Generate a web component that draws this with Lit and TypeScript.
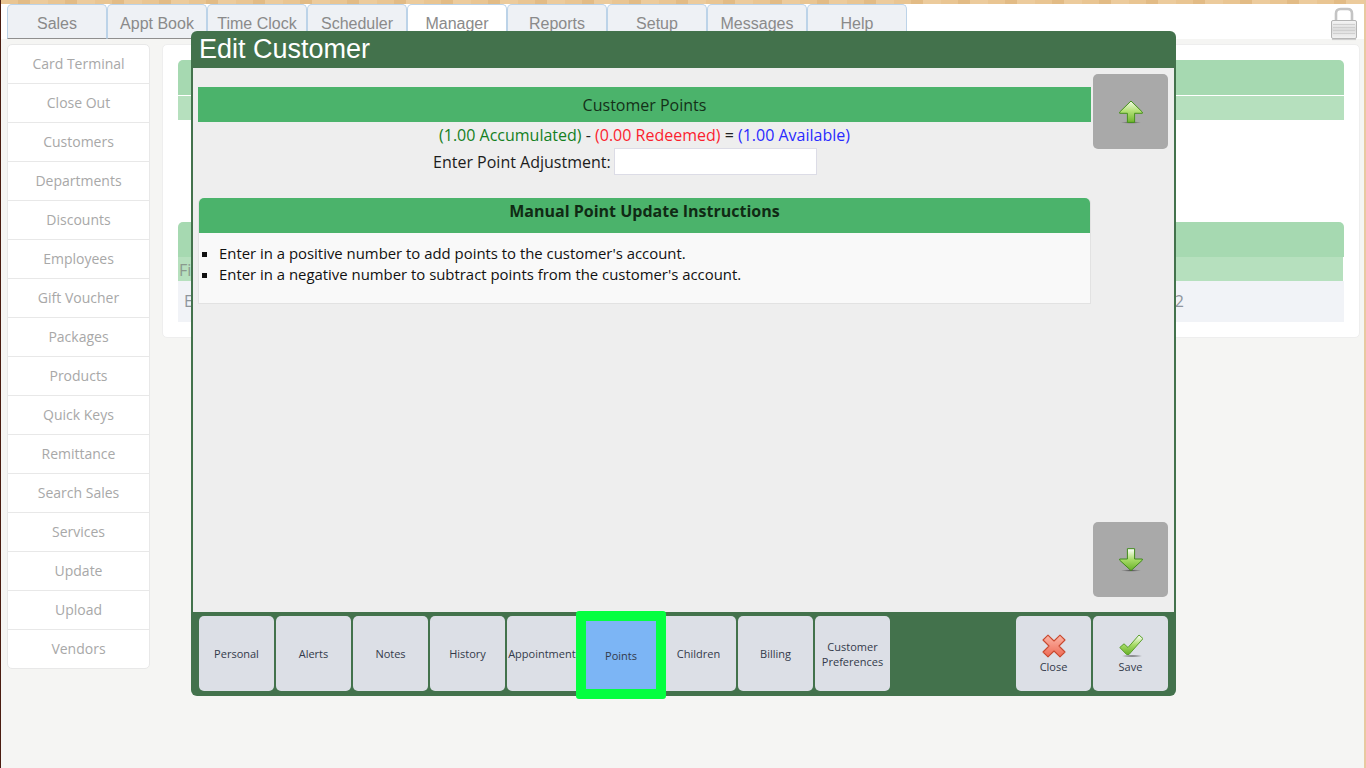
import { LitElement, html, css, svg } from "lit";
import { customElement } from "lit/decorators.js";

const TABS = ["Sales", "Appt Book", "Time Clock", "Scheduler", "Manager", "Reports", "Setup", "Messages", "Help"];
const SIDE = ["Card Terminal", "Close Out", "Customers", "Departments", "Discounts", "Employees", "Gift Voucher", "Packages", "Products", "Quick Keys", "Remittance", "Search Sales", "Services", "Update", "Upload", "Vendors"];

const defs = svg`
  <defs>
    <linearGradient id="gUp" x1="0" y1="0" x2="0" y2="1"><stop offset="0" stop-color="#f4fbe8"/><stop offset=".45" stop-color="#b6e27a"/><stop offset="1" stop-color="#6fb52c"/></linearGradient>
    <linearGradient id="gDown" x1="0" y1="0" x2="0" y2="1"><stop offset="0" stop-color="#ffffff"/><stop offset=".5" stop-color="#a8dc68"/><stop offset="1" stop-color="#68b028"/></linearGradient>
    <linearGradient id="gRed" x1="0" y1="0" x2="0" y2="1"><stop offset="0" stop-color="#fbb5a6"/><stop offset="1" stop-color="#ee6a55"/></linearGradient>
    <linearGradient id="gLock" x1="0" y1="0" x2="0" y2="1"><stop offset="0" stop-color="#f6f6f6"/><stop offset=".5" stop-color="#dcdcdc"/><stop offset="1" stop-color="#f2f2f2"/></linearGradient>
    <radialGradient id="gShadow"><stop offset="0" stop-color="#333" stop-opacity=".75"/><stop offset="1" stop-color="#333" stop-opacity="0"/></radialGradient>
  </defs>`;

const arrowUp = html`<svg class="ico" width="24" height="24" viewBox="0 0 24 24">${defs}
  <ellipse cx="12" cy="22.5" rx="10" ry="1.3" fill="url(#gShadow)"/>
  <path d="M12 1 L23.3 12 V13.3 H15.6 V22.4 H8.4 V13.3 H.7 V12 Z" fill="url(#gUp)" stroke="#46921c" stroke-width="1" stroke-linejoin="round"/>
</svg>`;
const arrowDown = html`<svg class="ico" width="24" height="24" viewBox="0 0 24 24">${defs}
  <ellipse cx="12" cy="22.5" rx="10" ry="1.3" fill="url(#gShadow)"/>
  <path d="M8.4 .7 H15.6 V11 H23.3 V12.2 L12 22.6 L.7 12.2 V11 H8.4 Z" fill="url(#gDown)" stroke="#3f8a1a" stroke-width="1" stroke-linejoin="round"/>
</svg>`;
const closeIco = html`<svg class="ico" width="24" height="24" viewBox="0 0 24 24">${defs}
  <path d="M6 1.2 L12 7 L18 1.2 L23 6 L17 12 L23 18 L18 22.8 L12 17 L6 22.8 L1 18 L7 12 L1 6 Z" fill="url(#gRed)" stroke="#c8492f" stroke-width="1.1" stroke-linejoin="round"/>
</svg>`;
const saveIco = html`<svg class="ico" width="24" height="24" viewBox="0 0 24 24">${defs}
  <ellipse cx="13" cy="22" rx="11" ry="1.3" fill="url(#gShadow)"/>
  <path d="M.8 13.5 L5 9.8 L9 13.5 L20 1 L24 4.6 L10 20.5 H7.6 Z" fill="url(#gDown)" stroke="#5a9e2c" stroke-width="1" stroke-linejoin="round"/>
</svg>`;
const lockIco = html`<svg width="26" height="34" viewBox="0 0 26 34">${defs}
  <path d="M5 15 V6.5 Q5 2 9.5 2 H16.5 Q21 2 21 6.5 V15" fill="none" stroke="#c4c4c4" stroke-width="2.6"/>
  <rect x=".5" y="13.5" width="25" height="18" rx="1.5" fill="url(#gLock)" stroke="#b4b4b4"/>
  <path d="M2 17.5 H24 M2 20.5 H24 M2 23.5 H24 M2 26.5 H24" stroke="#cfcfcf" stroke-width="1"/>
  <rect x="1" y="31.5" width="24" height="1.6" fill="#bdbdbd" opacity=".7"/>
</svg>`;

@customElement("app-root")
export class AppRoot extends LitElement {
  static styles = css`
    :host { display: block; position: relative; width: 1366px; height: 768px; overflow: hidden; background: #f5f5f3; font-family: "Open Sans", sans-serif; }
    .frame { height: 768px; box-sizing: border-box; border-left: 1px solid #4a1c10; border-right: 2px solid #e8c9a0; display: flex; flex-direction: column; }
    .wood { height: 4px; flex: none; background: repeating-linear-gradient(90deg, #e9c592 0 17px, #e2bb85 17px 29px, #eccb9c 29px 47px); }
    .nav { height: 35px; flex: none; box-sizing: border-box; background: #fff; display: flex; padding-left: 6px; position: relative; }
    .tab { width: 100px; height: 35px; box-sizing: border-box; background: #eef1f5; border: 1px solid #bcd3e8; border-bottom: 1px solid #8f8f8f; border-radius: 5px 5px 0 0; font: 16px/37px "Liberation Sans", sans-serif; color: #8a8a8a; text-align: center; }
    .tab.on { background: #fff; border-bottom-color: #fff; }
    .lock { position: absolute; right: 7px; top: 3px; }
    .main { display: flex; align-items: flex-start; gap: 12px; padding: 5px 4px 0 6px; }
    .side { width: 143px; box-sizing: border-box; flex: none; background: #fff; border: 1px solid #e8e8e8; border-radius: 5px; }
    .side div { height: 39px; box-sizing: border-box; border-bottom: 1px solid #e8e8e8; font-size: 14px; line-height: 38px; color: #a8a8a8; text-align: center; }
    .side div:last-child { height: 38px; border-bottom: 0; }
    .card { flex: 1; height: 294px; box-sizing: border-box; background: #fff; border: 1px solid #eeeeee; border-radius: 5px; padding: 15px; }
    .h1 { height: 35px; background: #a6d9b1; border-radius: 5px 5px 0 0; }
    .h2 { height: 24px; margin-top: 1px; background: #b6e0be; }
    .gap { height: 102px; }
    .h3 { height: 24px; background: #b6e0be; margin-right: 1px; font-size: 16px; line-height: 26px; color: #8a9a8e; padding-left: 1px; }
    .row { height: 41px; background: #f1f3f7; display: flex; justify-content: space-between; padding: 0 160px 0 6px; font-size: 16px; line-height: 41px; color: #8e959c; }
    .row span:last-child { margin-right: -160px; padding-right: 160px; }

    .modal { position: absolute; left: 191px; top: 31px; width: 985px; height: 665px; box-sizing: border-box; background: #43724c; border-radius: 6px; display: flex; flex-direction: column; padding: 0 2px; }
    .title { height: 37px; flex: none; box-sizing: border-box; padding-left: 6px; font: 27px/37px "Liberation Sans", sans-serif; color: #fff; }
    .body { height: 544px; flex: none; background: #eeeeee; display: flex; gap: 2px; padding: 6px 6px 0 5px; box-sizing: border-box; }
    .content { width: 893px; flex: none; padding-top: 13px; }
    .bar { height: 35px; background: #4bb36b; font-size: 16px; line-height: 36px; color: #143018; text-align: center; padding-left: 0; }
    .stats { text-align: center; font-size: 16px; line-height: 22px; margin-top: 2px; color: #222; padding-left: 0; }
    .g { color: #14801e; } .r { color: #fb1f2e; } .b { color: #2a2aff; }
    .adj { display: flex; height: 27px; margin-top: 2px; padding-left: 235px; align-items: center; gap: 3px; font-size: 16px; color: #1c1c1c; }
    .adj i { display: block; width: 203px; height: 27px; box-sizing: border-box; background: #fff; border: 1px solid #dcdce6; }
    .panel { margin-top: 23px; box-sizing: border-box; height: 106px; background: #f9f9f9; border: 1px solid #e2e2e2; border-top: 0; border-radius: 5px 5px 0 0; }
    .panel h3 { margin: 0; height: 35px; background: #4bb36b; font-size: 16px; font-weight: 700; line-height: 27px; color: #102a14; text-align: center; border-radius: 5px 5px 0 0; }
    .panel ul { margin: 10px 0 0; padding: 0 0 0 20px; font-size: 14.9px; line-height: 21px; color: #111; list-style: square; }
    .scroll { display: flex; flex-direction: column; justify-content: space-between; height: 523px; }
    .sbtn { width: 75px; height: 75px; background: #a9a9a9; border-radius: 5px; display: flex; align-items: center; justify-content: center; }
    .foot { height: 84px; display: flex; gap: 2px; padding: 4px 6px 0 6px; box-sizing: border-box; align-items: flex-start; }
    .fbtn { width: 75px; height: 75px; flex: none; box-sizing: border-box; background: #dcdfe6; border-radius: 5px; display: flex; flex-direction: column; align-items: center; justify-content: center; font-size: 11px; line-height: 15px; color: #333a4a; text-align: center; overflow: hidden; white-space: nowrap; padding-top: 0; }
    .fbtn.on { position: relative; width: 90px; height: 88px; margin: -5px -7px -8px -8px; border: 10px solid #04ff40; border-radius: 3px; background: #7cb5f5; }
    .spacer { flex: 1; }
    .ico { display: block; }
    .act { padding-top: 1px; }
    .act span { margin-top: 1px; }
  `;

  render() {
    return html`
      <div class="frame">
        <div class="wood"></div>
        <div class="nav">
          ${TABS.map((t) => html`<div class="tab ${t === "Manager" ? "on" : ""}">${t}</div>`)}
          <div class="lock">${lockIco}</div>
        </div>
        <div class="main">
          <div class="side">${SIDE.map((s) => html`<div>${s}</div>`)}</div>
          <div class="card">
            <div class="h1"></div><div class="h2"></div>
            <div class="gap"></div>
            <div class="h1"></div><div class="h3">Fi</div>
            <div class="row"><span>E</span><span>2</span></div>
          </div>
        </div>
      </div>
      <div class="modal">
        <div class="title">Edit Customer</div>
        <div class="body">
          <div class="content">
            <div class="bar">Customer Points</div>
            <div class="stats"><span class="g">(1.00 Accumulated)</span> - <span class="r">(0.00 Redeemed)</span> = <span class="b">(1.00 Available)</span></div>
            <div class="adj"><span>Enter Point Adjustment:</span><i></i></div>
            <div class="panel">
              <h3>Manual Point Update Instructions</h3>
              <ul>
                <li>Enter in a positive number to add points to the customer's account.</li>
                <li>Enter in a negative number to subtract points from the customer's account.</li>
              </ul>
            </div>
          </div>
          <div class="scroll">
            <div class="sbtn">${arrowUp}</div>
            <div class="sbtn">${arrowDown}</div>
          </div>
        </div>
        <div class="foot">
          ${["Personal", "Alerts", "Notes", "History", "Appointments"].map((t) => html`<div class="fbtn">${t}</div>`)}
          <div class="fbtn on">Points</div>
          ${["Children", "Billing"].map((t) => html`<div class="fbtn">${t}</div>`)}
          <div class="fbtn">Customer<br />Preferences</div>
          <div class="spacer"></div>
          <div class="fbtn act">${closeIco}<span>Close</span></div>
          <div class="fbtn act">${saveIco}<span>Save</span></div>
        </div>
      </div>
    `;
  }
}
